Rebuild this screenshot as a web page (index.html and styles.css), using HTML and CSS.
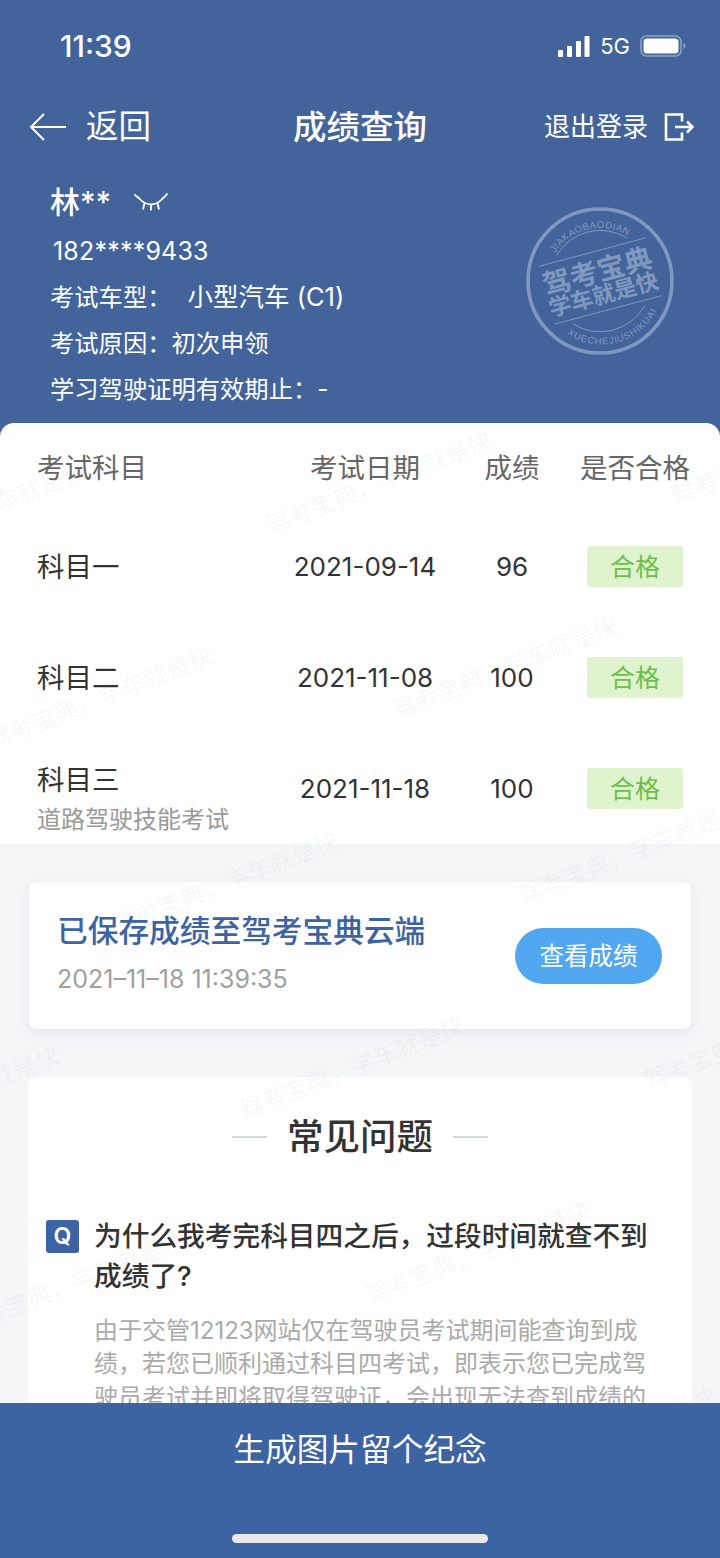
FILE: index.html
```html
<!DOCTYPE html>
<html lang="zh-CN">
<head>
<meta charset="utf-8">
<title>成绩查询</title>
<link rel="stylesheet" href="styles.css">
</head>
<body>
<div class="phone">
  <header class="head">
    <div class="status">
      <span class="time">11:39</span>
      <div class="status-right">
        <svg class="signal" width="32" height="21" viewBox="0 0 32 21"><rect x="0" y="14" width="5" height="7" rx="1"/><rect x="9" y="10" width="5" height="11" rx="1"/><rect x="18" y="5" width="5" height="16" rx="1"/><rect x="26.500" y="0" width="5" height="21" rx="1"/></svg>
        <span class="net">5G</span>
        <svg class="battery" width="46" height="22" viewBox="0 0 46 22"><rect x="1" y="1" width="40" height="20" rx="5.500" fill="none" stroke="#8ea4c6" stroke-width="1.500"/><rect x="3.500" y="3.500" width="35" height="15" rx="3.500" fill="#fff"/><path d="M43.500 8v6c1.300-.5 2-1.600 2-3s-.7-2.500-2-3z" fill="#8ea4c6"/></svg>
      </div>
    </div>
    <nav class="nav">
      <div class="nav-left">
        <svg width="38" height="30" viewBox="0 0 38 30" fill="none" stroke="#fff" stroke-width="2"><path d="M37 15H2M15 2 2 15l13 13"/></svg>
        <span class="back">返回</span>
      </div>
      <h1 class="title">成绩查询</h1>
      <div class="nav-right">
        <span class="logout">退出登录</span>
        <svg width="30" height="28" viewBox="0 0 30 28" fill="none" stroke="#fff" stroke-width="2.600"><path d="M18 8.500v-7H2v25h16v-7M11 14h17M23 8.500l5.500 5.500-5.500 5.500"/></svg>
      </div>
    </nav>
    <section class="info">
      <div class="name-row">
        <span class="name">林**</span>
        <svg class="eye" width="36" height="20" viewBox="0 0 36 20" fill="none" stroke="#fff" stroke-width="1.800"><path d="M5 5c4 5 8 7.500 13 7.500S27 10 31 5M1.500 2.500 6 6.500M34.500 1.500 30 6.500M11.500 11 10 17.500M24.500 11l1.500 6.500M18 12.500V18.500"/></svg>
      </div>
      <p class="phone-no">182****9433</p>
      <p class="line">考试车型：<span class="line-value">小型汽车 (C1)</span></p>
      <p class="line">考试原因：初次申领</p>
      <p class="line">学习驾驶证明有效期止：-</p>
    </section>
    <svg class="stamp" width="150" height="150" viewBox="0 0 150 150">
      <defs>
        <path id="arc-top" d="M30 47A53 53 0 0 1 121 48.500"/>
        <path id="arc-bot" d="M42 128A62 62 0 0 0 132 104"/>
      </defs>
      <circle cx="75" cy="75" r="72" fill="none" stroke="#7f98bf" stroke-width="3.600"/>
      <path d="M31 50A51 51 0 0 1 102 32M48 118A51 51 0 0 0 120 99" fill="none" stroke="#7f98bf" stroke-width="1"/>
      <path d="M14.300 60.300 120 32M30 118l106.700-28.300" fill="none" stroke="#7f98bf" stroke-width="1"/>
      <text class="stamp-small stamp-top"><textPath href="#arc-top">JIAKAOBAODIAN</textPath></text>
      <text class="stamp-small"><textPath href="#arc-bot">XUECHEJIUSHIKUAI</textPath></text>
      <g transform="rotate(-15 75 75)">
        <text class="stamp-big" x="75" y="75">驾考宝典</text>
        <text class="stamp-mid" x="75" y="97">学车就是快</text>
      </g>
    </svg>
  </header>

  <main class="scroll">
    <section class="scores">
      <div class="row row-head">
        <span class="cell-sub">考试科目</span>
        <span class="cell">考试日期</span>
        <span class="cell">成绩</span>
        <span class="cell">是否合格</span>
      </div>
      <div class="row">
        <span class="cell-sub subject">科目一</span>
        <span class="cell value">2021-09-14</span>
        <span class="cell value">96</span>
        <span class="cell badge">合格</span>
      </div>
      <div class="row">
        <span class="cell-sub subject">科目二</span>
        <span class="cell value">2021-11-08</span>
        <span class="cell value">100</span>
        <span class="cell badge">合格</span>
      </div>
      <div class="row">
        <div class="cell-sub subject-stack">
          <div class="subject">科目三</div>
          <div class="subject-note">道路驾驶技能考试</div>
        </div>
        <span class="cell value">2021-11-18</span>
        <span class="cell value">100</span>
        <span class="cell badge">合格</span>
      </div>
    </section>

    <section class="cloud">
      <div class="cloud-text">
        <h2 class="cloud-title">已保存成绩至驾考宝典云端</h2>
        <p class="cloud-date">2021–11–18 11:39:35</p>
      </div>
      <span class="cloud-btn">查看成绩</span>
    </section>

    <section class="faq">
      <div class="faq-head">
        <span class="dash"></span>
        <h2 class="faq-title">常见问题</h2>
        <span class="dash"></span>
      </div>
      <div class="q">
        <span class="q-mark">Q</span>
        <h3 class="q-text">为什么我考完科目四之后，过段时间就查不到成绩了?</h3>
      </div>
      <p class="a-text">由于交管12123网站仅在驾驶员考试期间能查询到成绩，若您已顺利通过科目四考试，即表示您已完成驾驶员考试并即将取得驾驶证，会出现无法查到成绩的</p>
    </section>

    <svg class="watermarks" width="720" height="980" viewBox="-5 418 720 980">
      <text transform="translate(-140 560) rotate(-21.500)">驾考宝典，学车就是快</text>
      <text transform="translate(265 530) rotate(-21.500)">驾考宝典，学车就是快</text>
      <text transform="translate(670 500) rotate(-21.500)">驾考宝典，学车就是快</text>
      <text transform="translate(-14 745) rotate(-21.500)">驾考宝典，学车就是快</text>
      <text transform="translate(391 715) rotate(-21.500)">驾考宝典，学车就是快</text>
      <text transform="translate(112 930) rotate(-21.500)">驾考宝典，学车就是快</text>
      <text transform="translate(517 900) rotate(-21.500)">驾考宝典，学车就是快</text>
      <text transform="translate(-167 1145) rotate(-21.500)">驾考宝典，学车就是快</text>
      <text transform="translate(238 1115) rotate(-21.500)">驾考宝典，学车就是快</text>
      <text transform="translate(643 1085) rotate(-21.500)">驾考宝典，学车就是快</text>
      <text transform="translate(-41 1330) rotate(-21.500)">驾考宝典，学车就是快</text>
      <text transform="translate(364 1300) rotate(-21.500)">驾考宝典，学车就是快</text>
      <text transform="translate(490 1485) rotate(-21.500)">驾考宝典，学车就是快</text>
    </svg>
  </main>

  <footer class="foot">
    <span class="foot-text">生成图片留个纪念</span>
    <span class="home-bar"></span>
  </footer>
</div>
</body>
</html>
```

FILE: styles.css
```css
* { box-sizing: border-box; }
html, body { margin: 0; padding: 0; }
body {
  width: 720px;
  height: 1558px;
  overflow: hidden;
  font-family: Inter, "Noto Sans CJK SC", sans-serif;
  background: #f5f6f8;
  color: #333;
}
h1, h2, h3, p { margin: 0; font-weight: 400; }
.phone {
  width: 720px;
  height: 1558px;
  display: flex;
  flex-direction: column;
  overflow: hidden;
}

/* header */
.head {
  position: relative;
  height: 437px;
  flex: none;
  background: #42649b;
  color: #fff;
}
.status {
  height: 90px;
  padding: 28px 34px 0 60px;
  display: flex;
  justify-content: space-between;
  align-items: flex-start;
}
.time { font-size: 30px; line-height: 36px; font-weight: 500; }
.status-right { display: flex; align-items: center; gap: 10px; height: 36px; }
.signal { fill: #fff; }
.net { font-size: 22px; line-height: 36px; }
.nav {
  position: relative;
  height: 74px;
  padding: 0 26px 0 29px;
  display: flex;
  justify-content: space-between;
  align-items: center;
}
.nav-left { display: flex; align-items: center; gap: 19px; }
.back { font-size: 32.500px; line-height: 40px; }
.title {
  font-size: 33.500px;
  font-weight: 500;
  line-height: 40px;
  position: absolute;
  left: 0;
  right: 0;
  text-align: center;
}
.nav-right { display: flex; align-items: center; gap: 16px; }
.logout { font-size: 26px; line-height: 34px; }
.info { padding: 0 0 0 50px; }
.name-row { display: flex; align-items: center; gap: 22px; height: 48px; margin-top: 14px; }
.name { font-size: 30px; font-weight: 500; line-height: 40px; }
.phone-no { font-size: 25px; line-height: 46px; margin: 2px 0 0 3px; letter-spacing: .2px; }
.line { font-size: 24.300px; line-height: 46px; }
.line-value { font-size: 25.500px; margin-left: 16px; }
.stamp { position: absolute; left: 525px; top: 206px; }
.stamp-small { font-family: "Liberation Sans", sans-serif; font-size: 9.500px; letter-spacing: .8px; fill: #7f98bf; }
.stamp-top { letter-spacing: .5px; }
.stamp-big { font-family: "Noto Sans CJK SC", sans-serif; font-size: 28px; font-weight: 700; fill: #7f98bf; text-anchor: middle; }
.stamp-mid { font-family: "Noto Sans CJK SC", sans-serif; font-size: 22.500px; font-weight: 700; fill: #7f98bf; text-anchor: middle; }

/* scroll area */
.scroll {
  position: relative;
  flex: 1;
  min-height: 0;
  margin-top: -14px;
  overflow: hidden;
}
.scores {
  background: #fff;
  border-radius: 14px 14px 0 0;
  height: 421px;
}
.row {
  display: grid;
  grid-template-columns: 254px 146px 148px 98px;
  padding-left: 38px;
  height: 111px;
  align-items: center;
  white-space: nowrap;
  position: relative;
  top: -1px;
}
.row-head { height: 89px; font-size: 27.500px; color: #666; top: -2px; }
.cell { display: flex; justify-content: center; }
.cell-sub { margin-left: -1px; }
.subject { font-size: 27.500px; line-height: 36px; color: #333; }
.subject-stack { padding-top: 20px; }
.value { font-size: 26px; color: #333; }
.subject-note { font-size: 24px; line-height: 30px; color: #999; margin-top: 7px; }
.badge {
  width: 96px;
  height: 41px;
  margin-left: 1px;
  background: #dff3cf;
  border-radius: 3px;
  color: #6cc04a;
  font-size: 25px;
  line-height: 43px;
}

/* cloud */
.cloud {
  margin: 38px 29px 0;
  height: 147px;
  background: #fff;
  border-radius: 8px;
  box-shadow: 0 4px 14px rgba(40, 60, 90, .07);
  padding: 0 29px 0 30px;
  display: flex;
  align-items: center;
  justify-content: space-between;
}
.cloud-text { margin-top: -7px; }
.cloud-title { font-size: 30.700px; line-height: 44px; font-weight: 500; color: #3c63a2; white-space: nowrap; margin-left: -2px; }
.cloud-date { font-size: 25px; line-height: 34px; color: #a0a0a0; margin: 9px 0 0 -2px; }
.cloud-btn {
  width: 147px;
  height: 56px;
  border-radius: 28px;
  background: #51a7f0;
  color: #fff;
  font-size: 24.500px;
  line-height: 56px;
  text-align: center;
}

/* faq */
.faq {
  margin: 48px 28px 0;
  background: #fff;
  border-radius: 8px;
  padding: 0 42px 0 18px;
}
.faq-head {
  height: 120px;
  display: flex;
  align-items: center;
  justify-content: center;
  gap: 20px;
  margin-left: -18px;
  margin-right: -42px;
}
.dash { width: 35px; height: 2px; background: #d5d9e2; }
.faq-title { font-size: 36.500px; font-weight: 500; line-height: 50px; color: #333; }
.q { display: flex; gap: 15px; margin-top: 19px; }
.q-mark {
  flex: none;
  width: 33px;
  height: 33px;
  margin-top: 4px;
  background: #3c63a2;
  border-radius: 3px;
  color: #fff;
  font-size: 23px;
  font-weight: 600;
  line-height: 33px;
  text-align: center;
}
.q-text { font-size: 27.700px; line-height: 40px; font-weight: 500; color: #333; }
.a-text { font-size: 24px; line-height: 33.300px; color: #aaa; margin: 18px 0 0 48px; }

.watermarks {
  position: absolute;
  left: 0;
  top: 0;
  pointer-events: none;
  font-family: "Noto Sans CJK SC", sans-serif;
  font-size: 24px;
  fill: rgba(30, 40, 60, .045);
}

/* footer */
.foot {
  flex: none;
  height: 155px;
  position: relative;
  z-index: 1;
  background: #3c63a2;
  color: #fff;
  display: flex;
  flex-direction: column;
  align-items: center;
}
.foot-text { font-size: 31.700px; line-height: 40px; margin-top: 27px; }
.home-bar { width: 256px; height: 9px; border-radius: 5px; background: #e8e8e8; margin-top: 64px; }
```
